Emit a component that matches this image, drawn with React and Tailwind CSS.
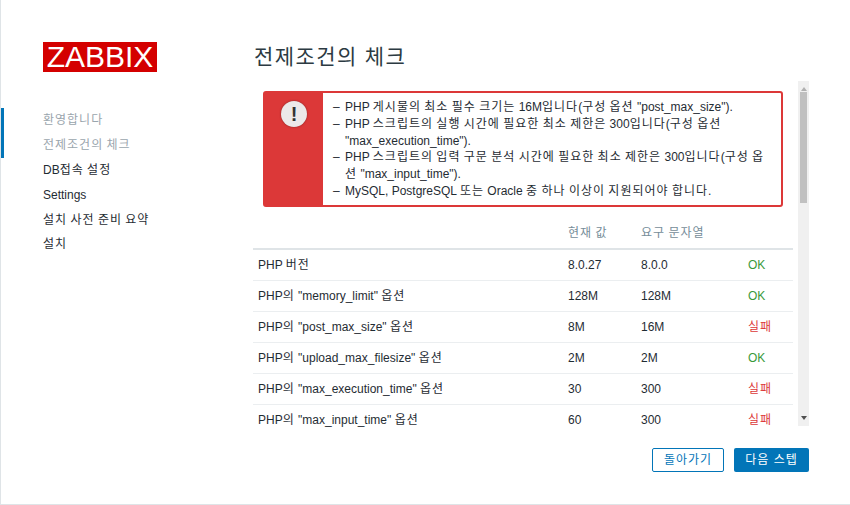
const font = { fontFamily: '"Liberation Sans","Noto Sans CJK KR",sans-serif' };

const rows = [
  ['PHP 버전', '8.0.27', '8.0.0', 'OK'],
  ['PHP의 "memory_limit" 옵션', '128M', '128M', 'OK'],
  ['PHP의 "post_max_size" 옵션', '8M', '16M', '실패'],
  ['PHP의 "upload_max_filesize" 옵션', '2M', '2M', 'OK'],
  ['PHP의 "max_execution_time" 옵션', '30', '300', '실패'],
  ['PHP의 "max_input_time" 옵션', '60', '300', '실패'],
];

const nav = [
  ['환영합니다', true],
  ['전제조건의 체크', true],
  ['DB접속 설정', false],
  ['Settings', false],
  ['설치 사전 준비 요약', false],
  ['설치', false],
];

const msgs = [
  ['PHP 게시물의 최소 필수 크기는 16M입니다(구성 옵션 "post_max_size").'],
  ['PHP 스크립트의 실행 시간에 필요한 최소 제한은 300입니다(구성 옵션', '"max_execution_time").'],
  ['PHP 스크립트의 입력 구문 분석 시간에 필요한 최소 제한은 300입니다(구성 옵', '션 "max_input_time").'],
  ['MySQL, PostgreSQL 또는 Oracle 중 하나 이상이 지원되어야 합니다.'],
];

// Hangul in the reference sets on a full-em advance; the installed CJK face is narrower.
function K({ t }) {
  return t.split(/([\uac00-\ud7a3]+)/).map((part, i) =>
    i % 2 ? <span key={i} className="tracking-[1px]">{part}</span> : part
  );
}

export default function App() {
  return (
    <div style={font} className="w-[850px] h-[505px] bg-white border-l border-b border-[#dfe4e7] flex overflow-hidden text-[12px] text-[#1f2c33] box-border">
      <aside className="w-[252px] shrink-0 flex flex-col">
        <div className="ml-[42px] mt-[42px] w-[114px] h-[30px] bg-[#d40000] text-white flex items-center justify-center text-[30px] leading-none">
          ZABBIX
        </div>
        <nav className="mt-[36px] flex">
          <div className="flex flex-col w-full">
            {nav.map(([t, done]) => (
              <div key={t} className={`h-[24.8px] flex items-center leading-[16px] ${done ? 'text-[#9aa5ad] border-l-[3px] border-[#0275b8] pl-[39px]' : 'pl-[42px]'}`}>
                <span><K t={t} /></span>
              </div>
            ))}
          </div>
        </nav>
      </aside>
      <main className="flex-1 flex flex-col min-w-0">
        <h1 className="mt-[42px] h-[29px] ml-[1px] text-[21px] leading-[29px] font-normal tracking-[1.4px] text-[#2c3a42]">전제조건의 체크</h1>
        <div className="mt-[10px] h-[345px] w-[556px] flex items-start">
          <div className="w-[540px] h-[346px] shrink-0 overflow-hidden">
            <div className="mx-[10px] mt-[10px] h-[116px] flex rounded-[3px] border-2 border-[#dc3838] bg-white">
              <div className="w-[58px] shrink-0 bg-[#dc3838] flex justify-center pt-[8px]">
                <div className="w-[26px] h-[26px] rounded-full bg-[#ece9e9] shadow-[0_0_2px_#7a1f1f] flex items-center justify-center text-[#333] text-[20px] font-bold leading-none">!</div>
              </div>
              <ul className="pl-[10px] pt-[6px] leading-[16.8px] text-[12px] w-[450px]">
                {msgs.map((m) => (
                  <li key={m[0]} className="flex">
                    <span className="w-[12px] shrink-0">–</span>
                    <div>
                      {m.map((l) => <div key={l} className="whitespace-nowrap"><K t={l} /></div>)}
                    </div>
                  </li>
                ))}
              </ul>
            </div>
            <table className="mt-[10px] w-[540px] table-fixed border-collapse leading-[16px]">
              <thead>
                <tr className="h-[32px] border-b-2 border-[#dfe4e7] text-[#768d99]">
                  <th className="w-[310px]"></th>
                  <th className="w-[73px] pl-[5px] text-left font-normal"><K t="현재 값" /></th>
                  <th className="w-[107px] pl-[5px] text-left font-normal"><K t="요구 문자열" /></th>
                  <th className="w-[50px]"></th>
                </tr>
              </thead>
              <tbody>
                {rows.map(([a, b, c, d]) => (
                  <tr key={a} className="h-[31px] border-b border-[#ebeef0]">
                    <td className="pl-[5px]"><K t={a} /></td>
                    <td className="pl-[5px]">{b}</td>
                    <td className="pl-[5px]">{c}</td>
                    <td className={`pl-[5px] ${d === 'OK' ? 'text-[#3a9a3a]' : 'text-[#dc3838]'}`}><K t={d} /></td>
                  </tr>
                ))}
              </tbody>
            </table>
          </div>
          <div className="ml-[5px] w-[11px] h-[345px] bg-[#f0f0f0] flex flex-col items-center">
            <div className="mt-[6px] w-0 h-0 border-x-[3px] border-x-transparent border-b-[4px] border-b-[#b0b0b0]"></div>
            <div className="mt-[1px] w-[7px] h-[111px] bg-[#c0c0c0]"></div>
            <div className="mt-auto mb-[6px] w-0 h-0 border-x-[3px] border-x-transparent border-t-[4px] border-t-[#505050]"></div>
          </div>
        </div>
        <div className="mt-[22px] w-[556px] flex justify-end gap-[10px]">
          <button className="w-[72px] h-[24px] rounded-[2px] border border-[#0275b8] text-[#0275b8] bg-white text-[12px] tracking-[1px]">돌아가기</button>
          <button className="w-[75px] h-[24px] rounded-[2px] bg-[#0275b8] text-white text-[12px] tracking-[1px]">다음 스텝</button>
        </div>
      </main>
    </div>
  );
}
